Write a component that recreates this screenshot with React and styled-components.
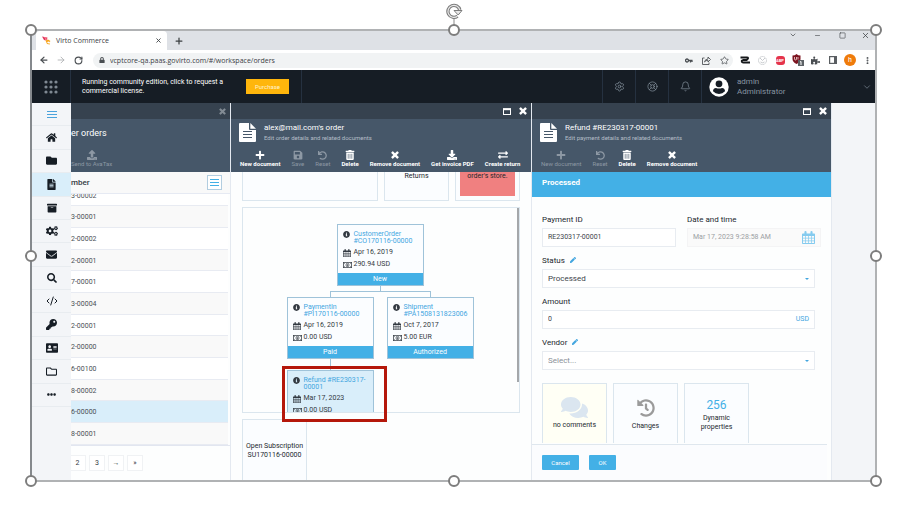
import React from "react";
import styled, { createGlobalStyle, css } from "styled-components";
import {
  FaHome, FaFolder, FaFileAlt, FaArchive, FaCogs, FaEnvelope, FaSearch, FaKey,
  FaAddressCard, FaRegFolder, FaEllipsisH, FaUpload, FaPlus, FaSave, FaUndo, FaTrashAlt,
  FaDownload, FaExchangeAlt, FaInfoCircle, FaPen, FaComments, FaHistory, FaLock,
  FaPuzzlePiece,
} from "react-icons/fa";
import {
  ArrowLeft, ArrowRight, RotateCw, X, Plus, ChevronDown, Minus, Square, Star,
  Settings, LifeBuoy, Bell, EllipsisVertical, CodeXml,
} from "lucide-react";

const Global = createGlobalStyle`
  * { box-sizing: border-box; }
  body { margin: 0; background: #fff; font-family: Roboto, "Liberation Sans", sans-serif; font-size: 7px; line-height: 9px; color: #333a42; }
  button, input, select { font: inherit; color: inherit; margin: 0; border-radius: 0; }
  button { cursor: pointer; }
  svg { display: block; flex: none; }
`;

const Page = styled.div`
  height: 100vh;
  min-height: 516px;
  padding: 29px 21px 34px 30px;
  display: flex;
`;
const Frame = styled.div`
  position: relative;
  flex: 1;
  min-width: 0;
  display: flex;
  border: 2px solid #b0b2b4;
  border-left-color: #85898d;
`;
const Handle = styled.span`
  position: absolute;
  left: ${(p) => p.$x};
  top: ${(p) => p.$y};
  width: 12px;
  height: 12px;
  transform: translate(-50%, -50%);
  border: 2px solid #7d7d7d;
  border-radius: 50%;
  background: #fff;
  z-index: 5;
`;
const Rotate = styled.svg`
  position: absolute;
  left: 50%;
  bottom: 100%;
  margin-left: -8px;
`;
const Browser = styled.div`
  flex: 1;
  min-width: 0;
  min-height: 0;
  display: flex;
  flex-direction: column;
  overflow: hidden;
`;

/* Browser chrome */
const TabStrip = styled.div`
  flex: none;
  height: 19px;
  display: flex;
  align-items: center;
  background: #dee1e6;
  padding-left: 4px;
  color: #3c4043;
`;
const Tab = styled.div`
  align-self: stretch;
  width: 131px;
  display: flex;
  align-items: center;
  gap: 5px;
  padding: 0 5px 0 6px;
  background: #fff;
  border-radius: 4px 4px 0 0;
  font-family: "Open Sans", sans-serif;
  font-size: 7px;
`;
const TabTitle = styled.span`flex: 1; white-space: nowrap;`;
const PlainButton = styled.button`
  border: 0;
  padding: 0;
  background: none;
  display: flex;
  align-items: center;
  justify-content: center;
  color: ${(p) => p.$color || "inherit"};
  width: ${(p) => (p.$w ? p.$w + "px" : "auto")};
`;
const WindowControls = styled.div`
  margin-left: auto;
  align-self: flex-start;
  height: 8px;
  display: flex;
`;
const AddressRow = styled.div`
  flex: none;
  height: 20px;
  display: flex;
  align-items: center;
  background: #fff;
  padding-left: 3px;
  color: #4a4e52;
`;
const AddressBar = styled.div`
  flex: 1;
  height: 15px;
  margin: 0 3px 0 6px;
  padding: 0 0 0 6px;
  display: flex;
  align-items: center;
  gap: 5px;
  border-radius: 8px;
  background: #f1f3f4;
`;
const Url = styled.input`
  flex: 1;
  min-width: 0;
  border: 0;
  padding: 0;
  outline: 0;
  background: none;
  font-family: "Open Sans", sans-serif;
  font-size: 7px;
  color: #3b4045;
`;
const IconGroup = styled.div`display: flex;`;
const AbpBadge = styled.span`
  width: 9px;
  height: 9px;
  border-radius: 3px;
  background: #e5334b;
  color: #fff;
  font-size: 4px;
  line-height: 9px;
  font-weight: 700;
`;
const ProfileDot = styled.span`
  width: 12px;
  height: 12px;
  border-radius: 50%;
  background: #ef7b0b;
  color: #fff;
  font-size: 7px;
  line-height: 12px;
`;

/* Application header */
const AppHeader = styled.header`
  flex: none;
  height: 33px;
  display: grid;
  grid-template-columns: 39px 231fr 301fr 33px 33px 33px 173px;
  background: #161d25;
  color: #8794a1;
`;
const HeaderCell = styled.div`
  display: flex;
  align-items: center;
  justify-content: ${(p) => (p.$spread ? "flex-start" : "center")};
  padding: ${(p) => (p.$spread ? p.$spread : "0")};
  gap: 8px;
  border-right: 1px solid #253140;
  &:last-child { border-right: 0; }
`;
const License = styled.p`
  margin: 0;
  width: 156px;
  color: #fff;
`;
const Purchase = styled.button`
  width: 43px;
  height: 15px;
  border: 0;
  padding: 0;
  background: #ffb60c;
  color: #fff3d0;
  font-size: 6px;
`;
const UserText = styled.div`
  flex: 1;
  font-size: 8px;
  line-height: 10px;
`;

/* Workspace */
const Workspace = styled.main`
  flex: 1;
  min-height: 0;
  display: grid;
  grid-template-columns: 39px minmax(0, 160fr) minmax(0, 301fr) minmax(0, 300fr) minmax(0, 43fr);
  background: #f3f5f8;
`;
const SideNav = styled.nav`
  height: 304px;
  display: grid;
  grid-auto-rows: 1fr;
`;
const NavItem = styled.button`
  border: 0;
  border-bottom: 1px solid #e8ecf0;
  padding: 0;
  display: flex;
  align-items: center;
  justify-content: center;
  background: ${(p) => (p.$active ? "#d9eefa" : "transparent")};
  color: ${(p) => (p.$blue ? "#4aa3dc" : "#161d25")};
`;
const Blade = styled.section`
  min-height: 0;
  min-width: 0;
  display: flex;
  flex-direction: column;
  background: #fdfefe;
  border-right: 1px solid #e4e9f0;
  overflow: hidden;
`;
const BladeBar = styled.div`
  flex: none;
  height: 16px;
  display: flex;
  align-items: center;
  justify-content: flex-end;
  gap: 8px;
  padding-right: 4px;
  background: #36424f;
  color: ${(p) => (p.$muted ? "#828b94" : "#fff")};
`;
const BladeHead = styled.div`
  flex: none;
  height: 27px;
  display: flex;
  align-items: center;
  gap: 8px;
  padding-left: ${(p) => (p.$cut ? "0" : "8px")};
  background: #465769;
  color: #fff;
`;
const BladeTitle = styled.h2`
  margin: 0;
  font-size: ${(p) => (p.$large ? "9px" : "8px")};
  line-height: 10px;
  font-weight: 400;
  white-space: nowrap;
`;
const BladeSubtitle = styled.p`
  margin: 0;
  font-size: 6px;
  color: #b4bdc7;
  white-space: nowrap;
`;
const Toolbar = styled.div`
  flex: none;
  height: 26px;
  display: flex;
  gap: 11px;
  padding: 4px 0 0 ${(p) => (p.$cut ? "0" : "9px")};
  background: #465769;
`;
const ToolButton = styled.button`
  border: 0;
  padding: 0;
  background: none;
  display: flex;
  flex-direction: column;
  align-items: center;
  font-size: 6px;
  font-weight: ${(p) => (p.disabled ? 400 : 700)};
  line-height: 8px;
  white-space: nowrap;
  color: ${(p) => (p.disabled ? "#8d98a4" : "#fff")};
`;
const ToolIcon = styled.span`
  height: 10px;
  display: flex;
  align-items: center;
`;
const BladeBody = styled.div`
  position: relative;
  flex: 1;
  min-height: 0;
  display: flex;
  flex-direction: column;
  overflow: hidden;
`;

/* Order list */
const ListHead = styled.div`
  flex: none;
  height: 22px;
  display: flex;
  align-items: center;
  justify-content: space-between;
  padding-right: 8px;
  background: #f9f9f9;
  font-weight: 500;
  font-size: 8px;
  border-bottom: 1px solid #e6eaf3;
`;
const ListButton = styled.button`
  width: 15px;
  height: 15px;
  padding: 0;
  display: flex;
  align-items: center;
  justify-content: center;
  border: 1px solid #b2cde0;
  background: #fff;
  color: #43b0e6;
`;
const ListScroll = styled.div`
  flex: none;
  height: 252px;
  display: flex;
  flex-direction: column;
  justify-content: flex-end;
  overflow: hidden;
  border-bottom: 1px solid #e2e6f0;
`;
const OrderTable = styled.table`
  width: calc(100% - 2px);
  height: 260px;
  flex: none;
  border-collapse: collapse;
  font-size: 7px;
  color: #4a4f55;
`;
const OrderRow = styled.tr`
  background: ${(p) => (p.$selected ? "#d9eefa" : p.$striped ? "#f9f9f9" : "#fff")};
  td { padding: 2px 0 0; border-bottom: 1px solid #e8ebf2; }
`;
const Pager = styled.div`
  display: flex;
  gap: 3px;
  padding-top: 9px;
`;
const PageButton = styled.button`
  width: 16px;
  height: 16px;
  padding: 0;
  border: 1px solid #f0f2f4;
  border-left-width: ${(p) => (p.$cut ? "0" : "1px")};
  margin-left: ${(p) => (p.$cut ? "-1px" : "0")};
  background: #fff;
`;

/* Widgets */
const WidgetRow = styled.div`
  flex: none;
  display: flex;
  gap: 6px;
  height: ${(p) => p.$h || "auto"};
  margin-top: ${(p) => p.$top || "0"};
`;
const Widget = styled.div`
  flex: ${(p) => p.$flex || "none"};
  width: ${(p) => (p.$flex ? "auto" : "65px")};
  display: flex;
  flex-direction: column;
  align-items: center;
  gap: ${(p) => p.$gap || "0"};
  text-align: center;
  padding: ${(p) => p.$pad || "0"};
  border: 1px solid #dbe6ee;
  border-top-width: ${(p) => (p.$noTop ? "0" : "1px")};
  border-bottom-width: ${(p) => (p.$noBottom ? "0" : "1px")};
  background: ${(p) => (p.$yellow ? "#fffff5" : "#fbfdff")};
  color: #22282e;
`;
const Warning = styled.div`
  width: 55px;
  height: 24px;
  background: #f08080;
`;
const BigNumber = styled.span`
  font-size: 12px;
  line-height: 15px;
  color: #43b0e6;
`;
const OrderBody = styled(BladeBody)`
  padding: 0 11px;
  gap: 6px;
`;

/* Document tree */
const Tree = styled.div`
  position: relative;
  flex: none;
  height: 206px;
  padding: 16px 2px 0 0;
  display: flex;
  flex-direction: column;
  align-items: center;
  overflow: hidden;
  border: 1px solid #dbe6ee;
`;
const ScrollThumb = styled.span`
  position: absolute;
  right: 0;
  top: 0;
  width: 2px;
  height: 174px;
  background: #a4a7aa;
`;
const Node = styled.article`
  width: 87px;
  height: 62px;
  flex: none;
  display: flex;
  flex-direction: column;
  border: 1px solid #9fc3d9;
  background: ${(p) => (p.$active ? "#d9eefa" : "#fbfdff")};
`;
const NodeTop = styled.div`
  display: grid;
  grid-template-columns: 8px 1fr;
  column-gap: 3px;
  row-gap: 3px;
  align-items: center;
  padding: 6px 0 0 5px;
  & > :first-child { align-self: start; }
`;
const NodeLink = styled.a`
  color: #43a6df;
  line-height: 7px;
  text-decoration: none;
`;
const NodeState = styled.div`
  margin-top: auto;
  height: 12px;
  line-height: 12px;
  text-align: center;
  color: #fff;
  background: #43b0e6;
`;
const Trunk = styled.span`
  flex: none;
  width: 1px;
  height: ${(p) => p.$h};
  background: #9fc3d9;
`;
const Fork = styled.span`
  flex: none;
  width: 101px;
  height: 6px;
  border: 1px solid #9fc3d9;
  border-bottom: 0;
`;
const Level = styled.div`display: flex; gap: 13px; align-items: flex-start;`;
const Branch = styled.div`display: flex; flex-direction: column; align-items: center;`;
const Marker = styled.span`
  position: absolute;
  left: 50%;
  top: 194px;
  width: 105px;
  height: 56px;
  margin-left: -99px;
  border: 3px solid #b5180b;
`;

/* Refund form */
const StatusBar = styled.div`
  flex: none;
  height: 25px;
  padding: 0 10px;
  line-height: 22px;
  font-size: 8px;
  font-weight: 700;
  color: #fff;
  background: #43b0e6;
`;
const Form = styled.form`
  flex: 1;
  min-height: 0;
  display: flex;
  flex-direction: column;
  gap: 8px;
  padding: 17px 10px 0;
  overflow: hidden;
`;
const FieldPair = styled.div`display: grid; grid-template-columns: 1fr 1fr; gap: 11px;`;
const Field = styled.div`
  display: flex;
  flex-direction: column;
  gap: 4px;
  margin-right: ${(p) => (p.$inset ? "6px" : "0")};
`;
const LabelRow = styled.div`
  display: flex;
  align-items: center;
  gap: 5px;
  height: 10px;
  font-size: 8px;
  color: #22282e;
`;
const ControlBox = styled.div`
  height: 19px;
  display: flex;
  align-items: center;
  padding: 0 5px;
  border: 1px solid ${(p) => (p.$muted ? "#f4f4f5" : "#e8ecf1")};
  background: ${(p) => (p.$muted ? "#fafafa" : "#fff")};
  color: ${(p) => (p.$muted ? "#9b9fa3" : "#3d444b")};
`;
const controlStyle = css`
  flex: 1;
  min-width: 0;
  width: 100%;
  border: 0;
  padding: 0;
  outline: 0;
  background: none;
  appearance: none;
`;
const TextInput = styled.input`${controlStyle}`;
const Select = styled.select`
  ${controlStyle}
  font-size: 8px;
  color: ${(p) => (p.$empty ? "#8b9198" : "inherit")};
`;
const Caret = styled.span`
  border: 2px solid transparent;
  border-top-color: #43a6df;
  border-bottom: 0;
`;
const Currency = styled.span`color: #43a6df;`;
const Footer = styled.footer`
  flex: none;
  height: 36px;
  display: flex;
  gap: 10px;
  padding: 10px;
  margin-right: 4px;
  border-top: 1px solid #dfe7ee;
  background: #fbfcfe;
`;
const Action = styled.button`
  width: ${(p) => (p.$wide ? "37px" : "27px")};
  height: 15px;
  border: 0;
  padding: 0;
  border-radius: 1px;
  background: #43b0e6;
  color: #fff;
  font-size: 6px;
`;

const Times = ({ size = 8 }) => (
  <svg width={size} height={size} viewBox="250 250 1290 1290" fill="currentColor" aria-hidden="true">
    <path d="M1490 1322q0 40-28 68l-136 136q-28 28-68 28t-68-28l-294-294-294 294q-28 28-68 28t-68-28l-136-136q-28-28-28-68t28-68l294-294-294-294q-28-28-28-68t28-68l136-136q28-28 68-28t68 28l294 294 294-294q28-28 68-28t68 28l136 136q28 28 28 68t-28 68l-294 294 294 294q28 28 28 68z" transform="translate(0 -64)" />
  </svg>
);
const Maximize = () => (
  <svg width="8" height="7" viewBox="0 0 8 7" fill="none" stroke="currentColor" aria-hidden="true">
    <rect x=".5" y="1" width="7" height="5.5" />
    <path d="M0 1.2h8" strokeWidth="2" />
  </svg>
);
const DocumentIcon = () => (
  <svg width="17" height="19" viewBox="0 0 17 19" aria-hidden="true">
    <path d="M1 0h9v6q0 1 1 1h6v11q0 1-1 1H1q-1 0-1-1V1q0-1 1-1z" fill="#fff" />
    <path d="M11.300 0l5.700 5.700h-5.700z" fill="#fff" />
    <path d="M4 8.500h9M4 11.500h9M4 14.500h9" stroke="#465769" strokeWidth="1.200" />
  </svg>
);
const Lines = () => (
  <svg width="10" height="9" viewBox="0 0 10 9" stroke="currentColor" aria-hidden="true">
    <path d="M0 1.500h10M0 4.500h10M0 7.500h10" />
  </svg>
);
const ListLines = () => (
  <svg width="9" height="9" viewBox="0 0 9 9" stroke="currentColor" aria-hidden="true">
    <path d="M0 1.500h9M0 4.500h9M0 7.500h9" />
  </svg>
);
const Calendar = ({ size = 8 }) => (
  <svg width={size} height={size} viewBox="0 0 16 16" aria-hidden="true">
    <path fill="currentColor" fillRule="evenodd" d="M1 3h2V1.200Q3 0 4.300 0T5.600 1.200V3h4.800V1.200Q10.400 0 11.700 0T13 1.200V3h2q1 0 1 1v11q0 1-1 1H1q-1 0-1-1V4Q0 3 1 3ZM1.200 6.200v2.200h2.500V6.200ZM4.600 6.200v2.200h2.900V6.200ZM8.400 6.200v2.200h2.900V6.200ZM12.200 6.200v2.200h2.600V6.200ZM1.200 9.300v2.400h2.500V9.300ZM4.600 9.300v2.400h2.900V9.300ZM8.400 9.300v2.400h2.900V9.300ZM12.200 9.300v2.400h2.600V9.300ZM1.200 12.600v2.200h2.500v-2.200ZM4.600 12.600v2.200h2.900v-2.200ZM8.400 12.600v2.200h2.900v-2.200ZM12.200 12.600v2.200h2.600v-2.200Z" />
  </svg>
);
const Money = () => (
  <svg width="9" height="6" viewBox="0 0 18 12" fill="none" stroke="currentColor" aria-hidden="true">
    <rect x=".7" y=".7" width="16.600" height="10.600" strokeWidth="1.400" />
    <path d="M.7 4q3 0 3-3M17.300 4q-3 0-3-3M.7 8q3 0 3 3M17.300 8q-3 0-3 3" />
    <ellipse cx="9" cy="6" rx="3" ry="3.600" strokeWidth="1.400" />
    <path d="M9 4v4M8 8h2" strokeWidth="1.200" />
  </svg>
);
const VirtoLogo = () => (
  <svg width="9" height="9" viewBox="0 0 18 18" aria-hidden="true">
    <path d="M0 1l5 1 3 7-4-1z" fill="#e2345b" />
    <path d="M6 2l5 1-1 5-3-1z" fill="#f0506a" />
    <path d="M7 9l5-2 5 3-3 3 2 4-6-1z" fill="#f7a51c" />
    <path d="M10 12l4-1 1 3-3 1z" fill="#fff" />
  </svg>
);
const AppDots = () => (
  <svg width="14" height="14" viewBox="0 0 14 14" fill="#7f8993" aria-hidden="true">
    {[2, 7, 12].map((y) => [2, 7, 12].map((x) => <circle key={x + "-" + y} cx={x} cy={y} r="1.600" />))}
  </svg>
);
const Avatar = () => (
  <svg width="20" height="20" viewBox="0 0 20 20" aria-hidden="true">
    <circle cx="10" cy="10" r="9.700" fill="#fff" />
    <circle cx="10" cy="6.800" r="3.400" fill="#161d25" />
    <path d="M4 14.300q0-3 3-3.300 3 1.200 6 0 3 .3 3 3.300-2.400 2.600-6 2.600t-6-2.600z" fill="#161d25" />
  </svg>
);
const Loop = () => (
  <svg width="10" height="8" viewBox="0 0 20 16" fill="none" stroke="#17191c" strokeWidth="3.600" aria-hidden="true">
    <path d="M1 3h13q4 0 1 3.500L13 8H6Q2 9 4 12q1 1 3 1h13" />
  </svg>
);
const Target = () => (
  <svg width="9" height="9" viewBox="0 0 18 18" fill="none" stroke="#b6babd" strokeWidth="1.500" aria-hidden="true">
    <circle cx="9" cy="9" r="8" strokeDasharray="3 1" />
    <path d="M4 4l5 5 5-5M5 12q4 3 8 0" />
  </svg>
);
const Shield = () => (
  <svg width="12" height="12" viewBox="0 0 24 24" aria-hidden="true">
    <path d="M1 3q5 0 8-3 3 3 8 3v7q0 6-8 10Q1 16 1 10z" fill="#7c1420" />
    <path d="M5 6v4q0 2 2 2t2-2V6M12 6v5" stroke="#f6dada" strokeWidth="1.600" fill="none" />
    <rect x="12" y="12" width="12" height="12" fill="#5d6266" />
    <path d="M16 16l2-1v7" stroke="#fff" strokeWidth="2" fill="none" />
  </svg>
);
const BrowserPanel = () => (
  <svg width="8" height="8" viewBox="0 0 8 8" aria-hidden="true">
    <rect x=".6" y=".6" width="6.800" height="6.800" fill="none" stroke="#5a5e62" strokeWidth="1.200" />
    <path d="M5 0h3v8H5z" fill="#5a5e62" />
  </svg>
);
const KeyIcon = () => (
  <svg width="8" height="5" viewBox="0 0 16 10" fill="none" stroke="currentColor" strokeWidth="2.600" aria-hidden="true">
    <circle cx="4" cy="5" r="3" />
    <path d="M7 5h8M11 5v4M14 5v3" />
  </svg>
);
const ShareIcon = () => (
  <svg width="9" height="9" viewBox="0 0 18 18" fill="none" stroke="currentColor" strokeWidth="1.700" aria-hidden="true">
    <path d="M5 4H1v13h13v-4" />
    <path d="M5 12q1-6 7-6V2l5 5-5 5V8.500q-5 0-7 3.500z" />
  </svg>
);

const navItems = [
  { label: "Menu", icon: <Lines />, blue: true },
  { label: "Home", icon: <FaHome size={11} /> },
  { label: "Catalog", icon: <FaFolder size={11} /> },
  { label: "Orders", icon: <FaFileAlt size={11} />, active: true },
  { label: "Inventory", icon: <FaArchive size={10} /> },
  { label: "Settings", icon: <FaCogs size={12} /> },
  { label: "Notifications", icon: <FaEnvelope size={11} /> },
  { label: "Search", icon: <FaSearch size={10} /> },
  { label: "Code", icon: <CodeXml size={12} /> },
  { label: "Security", icon: <FaKey size={11} /> },
  { label: "Contacts", icon: <FaAddressCard size={12} /> },
  { label: "Assets", icon: <FaRegFolder size={11} /> },
  { label: "More", icon: <FaEllipsisH size={9} /> },
];
const orders = [
  "3-00002", "3-00001", "2-00002", "2-00001", "7-00001", "3-00004",
  "2-00001", "2-00000", "6-00100", "8-00002", "6-00000", "8-00001",
];
const handles = [
  ["-1px", "-1px"], ["50%", "-1px"], ["calc(100% + 1px)", "-1px"],
  ["-1px", "50%"], ["calc(100% + 1px)", "50%"],
  ["-1px", "calc(100% + 1px)"], ["50%", "calc(100% + 1px)"], ["calc(100% + 1px)", "calc(100% + 1px)"],
];

function Tool({ icon, children, disabled }) {
  return <ToolButton type="button" disabled={disabled}><ToolIcon>{icon}</ToolIcon>{children}</ToolButton>;
}

function DocNode({ name, date, sum, state, active }) {
  return (
    <Node $active={active}>
      <NodeTop>
        <FaInfoCircle size={7} />
        <NodeLink href="#document">{name}</NodeLink>
        <Calendar />
        <span>{date}</span>
        <Money />
        <span>{sum}</span>
      </NodeTop>
      {state && <NodeState>{state}</NodeState>}
    </Node>
  );
}

function BladeHeader({ title, subtitle }) {
  return (
    <>
      <BladeBar>
        <PlainButton type="button" aria-label="Maximize"><Maximize /></PlainButton>
        <PlainButton type="button" aria-label="Close"><Times /></PlainButton>
      </BladeBar>
      <BladeHead>
        <DocumentIcon />
        <div>
          <BladeTitle>{title}</BladeTitle>
          <BladeSubtitle>{subtitle}</BladeSubtitle>
        </div>
      </BladeHead>
    </>
  );
}

export default function App() {
  return (
    <Page>
      <Global />
      <Frame>
        <Rotate width="17" height="28" viewBox="0 0 17 28" fill="none" aria-hidden="true">
          <path d="M8 15v8" stroke="#8a8a8a" />
          <path d="M11.500 13.200A6 6 0 1 1 13.800 7" stroke="#7d7d7d" strokeWidth="3.400" />
          <path d="M11.500 13.200A6 6 0 1 1 13.800 7" stroke="#e8e8e8" strokeWidth="1.200" />
          <path d="M8 7.500h8l-3.800 4.500z" fill="#e8e8e8" stroke="#7d7d7d" />
        </Rotate>
        {handles.map(([x, y]) => <Handle key={x + y} $x={x} $y={y} />)}
        <Browser>
          <TabStrip>
            <Tab>
              <VirtoLogo />
              <TabTitle>Virto Commerce</TabTitle>
              <PlainButton type="button" aria-label="Close tab"><X size={7} strokeWidth={3} /></PlainButton>
            </Tab>
            <PlainButton type="button" aria-label="New tab" $w={23}><Plus size={10} strokeWidth={3} /></PlainButton>
            <WindowControls>
              <PlainButton type="button" aria-label="Tabs" $w={25}><ChevronDown size={8} /></PlainButton>
              <PlainButton type="button" aria-label="Minimize" $w={25}><Minus size={7} /></PlainButton>
              <PlainButton type="button" aria-label="Restore" $w={25}><Square size={7} /></PlainButton>
              <PlainButton type="button" aria-label="Close window" $w={20}><X size={9} /></PlainButton>
            </WindowControls>
          </TabStrip>
          <AddressRow>
            <PlainButton type="button" aria-label="Back" $w={17}><ArrowLeft size={10} strokeWidth={3} /></PlainButton>
            <PlainButton type="button" aria-label="Forward" $w={17} $color="#a9acaf"><ArrowRight size={10} /></PlainButton>
            <PlainButton type="button" aria-label="Reload" $w={18}><RotateCw size={9} strokeWidth={3} /></PlainButton>
            <AddressBar>
              <FaLock size={6} />
              <Url aria-label="Address" defaultValue="vcptcore-qa.paas.govirto.com/#/workspace/orders" />
              <IconGroup>
                <PlainButton type="button" aria-label="Passwords" $w={18}><KeyIcon /></PlainButton>
                <PlainButton type="button" aria-label="Share" $w={17}><ShareIcon /></PlainButton>
                <PlainButton type="button" aria-label="Bookmark" $w={18}><Star size={9} /></PlainButton>
              </IconGroup>
            </AddressBar>
            <IconGroup>
              <PlainButton type="button" aria-label="Loop" $w={18}><Loop /></PlainButton>
              <PlainButton type="button" aria-label="Target" $w={17}><Target /></PlainButton>
              <PlainButton type="button" aria-label="Ad block" $w={18}><AbpBadge>ABP</AbpBadge></PlainButton>
              <PlainButton type="button" aria-label="Shield" $w={18}><Shield /></PlainButton>
              <PlainButton type="button" aria-label="Extensions" $w={17}><FaPuzzlePiece size={9} /></PlainButton>
              <PlainButton type="button" aria-label="Side panel" $w={17}><BrowserPanel /></PlainButton>
              <PlainButton type="button" aria-label="Profile" $w={18}><ProfileDot>h</ProfileDot></PlainButton>
              <PlainButton type="button" aria-label="More" $w={16}><EllipsisVertical size={9} strokeWidth={3} /></PlainButton>
            </IconGroup>
          </AddressRow>
          <AppHeader>
            <HeaderCell><AppDots /></HeaderCell>
            <HeaderCell $spread="0 0 0 11px">
              <License>Running community edition, click to request a<br />commercial license.</License>
              <Purchase type="button">Purchase</Purchase>
            </HeaderCell>
            <HeaderCell />
            <HeaderCell><Settings size={11} strokeWidth={1.500} /></HeaderCell>
            <HeaderCell><LifeBuoy size={11} strokeWidth={1.500} /></HeaderCell>
            <HeaderCell><Bell size={11} strokeWidth={1.500} /></HeaderCell>
            <HeaderCell $spread="0 3px 0 7px">
              <Avatar />
              <UserText>admin<br />Administrator</UserText>
              <ChevronDown size={10} strokeWidth={1.500} />
            </HeaderCell>
          </AppHeader>
          <Workspace>
            <SideNav aria-label="Main">
              {navItems.map((n) => (
                <NavItem key={n.label} type="button" aria-label={n.label} $active={n.active} $blue={n.blue}>{n.icon}</NavItem>
              ))}
            </SideNav>

            <Blade>
              <BladeBar $muted>
                <PlainButton type="button" aria-label="Close"><Times size={7} /></PlainButton>
              </BladeBar>
              <BladeHead $cut><BladeTitle $large>er orders</BladeTitle></BladeHead>
              <Toolbar $cut><Tool disabled icon={<FaUpload size={10} />}>Send to AvaTax</Tool></Toolbar>
              <ListHead>
                mber
                <ListButton type="button" aria-label="Columns"><ListLines /></ListButton>
              </ListHead>
              <ListScroll>
                <OrderTable>
                  <tbody>
                    {orders.map((o, i) => (
                      <OrderRow key={i} $striped={i % 2 === 1} $selected={i === 10}><td>{o}</td></OrderRow>
                    ))}
                  </tbody>
                </OrderTable>
              </ListScroll>
              <Pager>
                <PageButton type="button" $cut>2</PageButton>
                <PageButton type="button">3</PageButton>
                <PageButton type="button">→</PageButton>
                <PageButton type="button">»</PageButton>
              </Pager>
            </Blade>

            <Blade>
              <BladeHeader title="alex@mail.com's order" subtitle="Edit order details and related documents" />
              <Toolbar>
                <Tool icon={<FaPlus size={10} />}>New document</Tool>
                <Tool disabled icon={<FaSave size={10} />}>Save</Tool>
                <Tool disabled icon={<FaUndo size={9} />}>Reset</Tool>
                <Tool icon={<FaTrashAlt size={10} />}>Delete</Tool>
                <Tool icon={<Times size={8} />}>Remove document</Tool>
                <Tool icon={<FaDownload size={10} />}>Get invoice PDF</Tool>
                <Tool icon={<FaExchangeAlt size={10} />}>Create return</Tool>
              </Toolbar>
              <OrderBody>
                <WidgetRow $h="29px">
                  <Widget $flex="1" $noTop />
                  <Widget $noTop>Returns</Widget>
                  <Widget $noTop><Warning>order's store.</Warning></Widget>
                </WidgetRow>
                <Tree>
                  <DocNode name={<>CustomerOrder<br />#CO170116-00000</>} date="Apr 16, 2019" sum="290.94 USD" state="New" />
                  <Trunk $h="5px" />
                  <Fork />
                  <Level>
                    <Branch>
                      <DocNode name={<>PaymentIn<br />#PI170116-00000</>} date="Apr 16, 2019" sum="0.00 USD" state="Paid" />
                      <Trunk $h="11px" />
                      <DocNode active name={<>Refund #RE230317-<br />00001</>} date="Mar 17, 2023" sum="0.00 USD" />
                    </Branch>
                    <DocNode name={<>Shipment<br />#PA1508131823006</>} date="Oct 7, 2017" sum="5.00 EUR" state="Authorized" />
                  </Level>
                  <ScrollThumb />
                </Tree>
                <WidgetRow>
                  <Widget $pad="22px 0 21px">Open Subscription<br />SU170116-00000</Widget>
                </WidgetRow>
                <Marker />
              </OrderBody>
            </Blade>

            <Blade>
              <BladeHeader title="Refund #RE230317-00001" subtitle="Edit payment details and related documents" />
              <Toolbar>
                <Tool disabled icon={<FaPlus size={10} />}>New document</Tool>
                <Tool disabled icon={<FaUndo size={9} />}>Reset</Tool>
                <Tool icon={<FaTrashAlt size={10} />}>Delete</Tool>
                <Tool icon={<Times size={8} />}>Remove document</Tool>
              </Toolbar>
              <StatusBar>Processed</StatusBar>
              <Form>
                <FieldPair>
                  <Field>
                    <LabelRow><label htmlFor="payment">Payment ID</label></LabelRow>
                    <ControlBox><TextInput id="payment" defaultValue="RE230317-00001" /></ControlBox>
                  </Field>
                  <Field>
                    <LabelRow><label htmlFor="date">Date and time</label></LabelRow>
                    <ControlBox $muted>
                      <TextInput id="date" disabled defaultValue="Mar 17, 2023 9:28:58 AM" />
                      <PlainButton type="button" aria-label="Pick a date" $color="#84cbef"><Calendar size={13} /></PlainButton>
                    </ControlBox>
                  </Field>
                </FieldPair>
                <Field $inset>
                  <LabelRow>
                    <label htmlFor="status">Status</label>
                    <PlainButton type="button" aria-label="Edit statuses" $color="#43a6df"><FaPen size={6} /></PlainButton>
                  </LabelRow>
                  <ControlBox><Select id="status"><option>Processed</option></Select><Caret /></ControlBox>
                </Field>
                <Field $inset>
                  <LabelRow><label htmlFor="amount">Amount</label></LabelRow>
                  <ControlBox><TextInput id="amount" defaultValue="0" /><Currency>USD</Currency></ControlBox>
                </Field>
                <Field $inset>
                  <LabelRow>
                    <label htmlFor="vendor">Vendor</label>
                    <PlainButton type="button" aria-label="Edit vendors" $color="#43a6df"><FaPen size={6} /></PlainButton>
                  </LabelRow>
                  <ControlBox><Select id="vendor" $empty><option>Select...</option></Select><Caret /></ControlBox>
                </Field>
                <WidgetRow $h="60px" $top="5px">
                  <Widget $yellow $noBottom $pad="10px 0 0"><FaComments size={27} color="#dbe6f0" /><span>no comments</span></Widget>
                  <Widget $noBottom $pad="15px 0 0" $gap="5px"><FaHistory size={18} color="#9b9b9b" /><span>Changes</span></Widget>
                  <Widget $noBottom $pad="14px 0 0" $gap="1px"><BigNumber>256</BigNumber><span>Dynamic<br />properties</span></Widget>
                </WidgetRow>
              </Form>
              <Footer>
                <Action type="button" $wide>Cancel</Action>
                <Action type="button">OK</Action>
              </Footer>
            </Blade>
          </Workspace>
        </Browser>
      </Frame>
    </Page>
  );
}
